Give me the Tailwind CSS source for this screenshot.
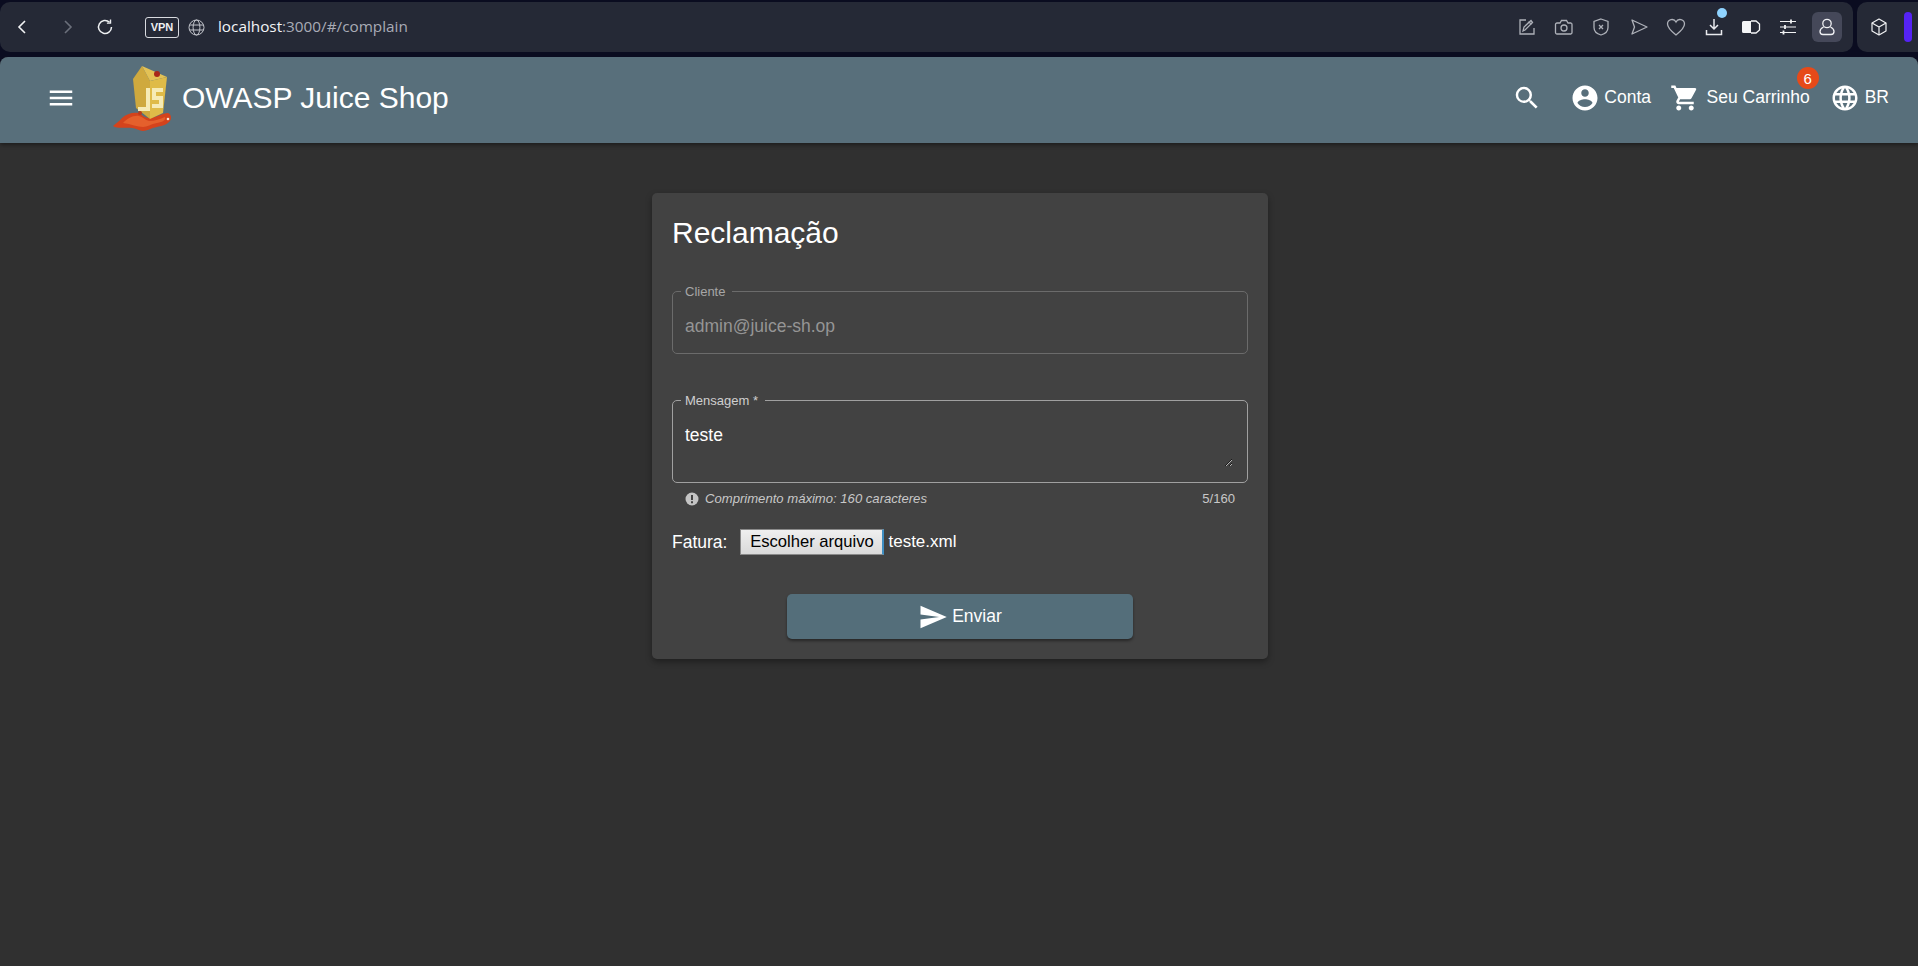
<!DOCTYPE html>
<html lang="pt-BR">
<head>
<meta charset="utf-8">
<title>OWASP Juice Shop</title>
<script src="https://cdn.jsdelivr.net/npm/@tailwindcss/browser@4"></script>
</head>
<body class="m-0 h-[966px] w-[1918px] overflow-hidden bg-[#0a0c20] font-['Liberation_Sans',Arial,sans-serif] text-white">
<!-- browser chrome -->
<div class="flex h-[57px] gap-[4px] pt-[2px] pb-[5px]">
  <div class="flex h-[50px] w-[1853px] items-center rounded-[10px] bg-[#252936] pl-[14px]">
    <svg class="h-[16px] w-[16px]" viewBox="0 0 16 16" fill="none" stroke="#f2f3f5" stroke-width="1.6"><path d="M11 2 5 8l6 6"/></svg>
    <svg class="ml-[30px] h-[16px] w-[16px]" viewBox="0 0 16 16" fill="none" stroke="#6b6f7b" stroke-width="1.6"><path d="m5 2 6 6-6 6"/></svg>
    <svg class="ml-[20px] h-[18px] w-[18px]" viewBox="0 0 18 18" fill="none" stroke="#eef0f2" stroke-width="1.5"><path d="M15.5 9a6.5 6.5 0 1 1-2-4.700"/><path d="M14.500 1.500v3.600h-3.600" stroke-width="1.400"/></svg>
    <span class="ml-[31px] flex h-[21px] w-[34px] items-center justify-center rounded-[3px] border border-[#d8dadf] text-[11px] font-bold text-[#eef0f2]">VPN</span>
    <svg class="ml-[9px] h-[17px] w-[17px]" viewBox="0 0 17 17" fill="none" stroke="#c3c5cc" stroke-width="1"><circle cx="8.500" cy="8.500" r="7.500"/><ellipse cx="8.500" cy="8.500" rx="3.400" ry="7.500"/><path d="M1.500 6h14M1.500 11h14"/></svg>
    <span class="ml-[13px] font-['Open_Sans',sans-serif] text-[15.300px] leading-none text-[#a9acb6]"><span class="text-[#f3f4f6]">localhost</span>:3000/#/complain</span>
    <div class="ml-auto flex items-center pr-[11px]">
      <div class="flex w-[37.400px] justify-center"><svg class="h-[20px] w-[20px]" viewBox="0 0 20 20" fill="none" stroke="#aeb1b9" stroke-width="1.300"><path d="M9 3H3v14h14v-6"/><path d="M6 14l2-1 7.500-7.500-1.500-2L7 10z"/><path d="M11 5l4 2"/></svg></div>
      <div class="flex w-[37.400px] justify-center"><svg class="h-[20px] w-[20px]" viewBox="0 0 20 20" fill="none" stroke="#aeb1b9" stroke-width="1.300"><path d="M3 6h3l1.500-2.500h5L14 6h3a1.500 1.500 0 0 1 1 1.500v8A1.500 1.500 0 0 1 17 17H3a1.500 1.500 0 0 1-1.500-1.500v-8A1.500 1.500 0 0 1 3 6z"/><circle cx="10" cy="11" r="3"/></svg></div>
      <div class="flex w-[37.400px] justify-center"><svg class="h-[20px] w-[20px]" viewBox="0 0 20 20" fill="none" stroke="#aeb1b9" stroke-width="1.300"><path d="M10 2l7 2.500v6c0 4-3.500 6.500-7 7.500-3.500-1-7-3.500-7-7.500v-6z"/><path d="m8 8 4 4m0-4-4 4"/></svg></div>
      <div class="flex w-[37.400px] justify-center"><svg class="h-[20px] w-[20px]" viewBox="0 0 20 20" fill="none" stroke="#aeb1b9" stroke-width="1.300" stroke-linejoin="round"><path d="M3 3l15 7-15 7 2.500-7z"/></svg></div>
      <div class="flex w-[37.400px] justify-center"><svg class="h-[20px] w-[20px]" viewBox="0 0 20 20" fill="none" stroke="#aeb1b9" stroke-width="1.300"><path d="M10 18C5 14 1.500 11 1.500 7A4.500 4.500 0 0 1 10 5a4.500 4.500 0 0 1 8.500 2c0 4-3.500 7-8.500 11z"/></svg></div>
      <div class="relative flex w-[37.400px] justify-center"><svg class="h-[20px] w-[20px]" viewBox="0 0 20 20" fill="none" stroke="#e8e9ed" stroke-width="1.500"><path d="M10 2v10m-4-4 4 4 4-4"/><path d="M2.500 13v4.500h15V13"/></svg><span class="absolute top-[-9px] left-[22px] h-[10px] w-[10px] rounded-full bg-[#8fd3ff]"></span></div>
      <div class="flex w-[37.400px] justify-center"><svg class="h-[14px] w-[20px]" viewBox="0 0 20 14"><path d="M2.500 1h7.500v12H2.500A1.500 1.500 0 0 1 1 11.500v-9A1.500 1.500 0 0 1 2.500 1z" fill="#f4f5f7"/><path d="M10 1h5l3.500 3v6L15 13h-5" fill="none" stroke="#f4f5f7" stroke-width="1.300"/></svg></div>
      <div class="flex w-[37.400px] justify-center"><svg class="h-[16px] w-[16px]" viewBox="0 0 16 16" fill="none" stroke="#f1f2f4" stroke-width="1.200"><path d="M0 2.500h16M0 8h16M0 13.500h16"/><path d="M11 .5v4M5 6v4M3.500 11.500v4" stroke-width="1.800"/></svg></div>
      <div class="ml-[5px] flex h-[30px] w-[30px] items-center justify-center rounded-[6px] bg-[#454859]"><svg class="h-[20px] w-[20px]" viewBox="0 0 20 20" fill="none" stroke="#f0f1f4" stroke-width="1.300"><circle cx="10" cy="6.500" r="4.200"/><path d="M6.500 10c-2 1-3.500 2.500-3.500 4.500S4.500 17.500 6 17.500h8c1.500 0 3-1 3-3s-1.500-3.500-3.500-4.500"/></svg></div>
    </div>
  </div>
  <div class="flex h-[50px] flex-1 items-center rounded-l-[10px] bg-[#252936] pl-[14px]">
    <svg class="h-[18px] w-[16px]" viewBox="0 0 16 18" fill="none" stroke="#f1f2f4" stroke-width="1.200" stroke-linejoin="round"><path d="M8 1l7 4v8l-7 4-7-4V5z"/><path d="M1 5l7 4 7-4M8 9v8"/></svg>
    <span class="ml-[17px] h-[30px] w-[8px] rounded-full bg-[#5523f5]"></span>
  </div>
</div>
<!-- app -->
<div class="h-[909px] overflow-hidden rounded-t-[8px] bg-[#303030]">
  <header class="relative z-10 flex h-[86px] items-center bg-[#586f7b] pr-[29px] pb-[5px] shadow-[0_2px_4px_rgba(0,0,0,0.4)]">
    <svg class="ml-[46px] h-[30px] w-[30px]" viewBox="0 0 24 24" fill="#fff"><path d="M3 18h18v-2H3v2zm0-5h18v-2H3v2zm0-7v2h18V6H3z"/></svg>
    <svg class="mt-[3px] ml-[37px] h-[66px] w-[60px]" viewBox="0 0 60 66">
      <path d="M0 60C3 57 7 55 9 52 13 48 20 46 25 47 29 48 31 52 36 52 42 52 50 47 55 47 58 48 59 52 57 55 54 59 48 60 44 61 38 62 34 65 30 65 26 65 23 62 19 62 13 61 4 63 0 60z" fill="#d4431c"/>
      <path d="M10 57C14 53 20 49 26 50 30 51 32 54 36 55 42 55 47 53 52 51 53 54 50 56 44 57 38 58 34 61 30 61 25 61 18 58 10 57z" fill="#e5602c"/>
      <path d="M20 13 29 0 37 15 37 53 23 42z" fill="#cfa93e"/>
      <path d="M29 0 54 11 37 15z" fill="#e3c255"/>
      <path d="M37 15 54 11 50 47 37 53z" fill="#dfbb48"/>
      <circle cx="44" cy="8" r="3" fill="#a8281a"/>
      <path d="M33 22h4v23H25v-4h8zM39 22h11v4h-7v4h7v12H39v-4h7v-4h-7z" fill="#f6ebb5"/>
      <circle cx="27" cy="47" r="2" fill="#b93a1d"/><circle cx="55" cy="53" r="1.300" fill="#fde3d2"/>
    </svg>
    <span class="ml-[9px] text-[30px] leading-none">OWASP Juice Shop</span>
    <div class="ml-auto flex items-center">
      <svg class="h-[30px] w-[30px]" viewBox="0 0 24 24" fill="#fff"><path d="M15.500 14h-.79l-.28-.27A6.470 6.470 0 0 0 16 9.500 6.500 6.500 0 1 0 9.500 16c1.610 0 3.090-.59 4.230-1.570l.27.28v.79l5 4.990L20.490 19l-4.990-5zm-6 0C7.010 14 5 11.990 5 9.500S7.010 5 9.500 5 14 7.010 14 9.500 11.990 14 9.500 14z"/></svg>
      <svg class="ml-[28.500px] h-[30px] w-[30px]" viewBox="0 0 24 24" fill="#fff"><path d="M12 2C6.480 2 2 6.480 2 12s4.480 10 10 10 10-4.480 10-10S17.520 2 12 2zm0 3c1.660 0 3 1.340 3 3s-1.340 3-3 3-3-1.340-3-3 1.340-3 3-3zm0 14.200a7.200 7.200 0 0 1-6-3.220c.03-1.990 4-3.080 6-3.080 1.990 0 5.970 1.090 6 3.080a7.200 7.200 0 0 1-6 3.220z"/></svg>
      <span class="ml-[4px] text-[17.500px]">Conta</span>
      <svg class="ml-[19px] h-[30px] w-[30px]" viewBox="0 0 24 24" fill="#fff"><path d="M7 18c-1.100 0-1.990.9-1.990 2S5.900 22 7 22s2-.9 2-2-.9-2-2-2zM1 2v2h2l3.600 7.590-1.350 2.450c-.16.28-.25.61-.25.960 0 1.100.9 2 2 2h12v-2H7.420c-.14 0-.25-.11-.25-.25l.03-.12.9-1.630h7.450c.75 0 1.410-.41 1.750-1.030l3.580-6.490A1 1 0 0 0 20.010 4H5.210l-.94-2H1zm16 16c-1.100 0-1.990.9-1.990 2s.89 2 1.990 2 2-.9 2-2-.9-2-2-2z"/></svg>
      <span class="relative ml-[6.500px] text-[17.500px]">Seu Carrinho<span class="absolute top-[-17px] right-[-9px] flex h-[22px] w-[22px] items-center justify-center rounded-full bg-[#e64a19] text-[15px] leading-none">6</span></span>
      <svg class="ml-[20px] h-[30px] w-[30px]" viewBox="0 0 24 24" fill="#fff"><path d="M11.990 2C6.470 2 2 6.480 2 12s4.470 10 9.990 10C17.520 22 22 17.520 22 12S17.520 2 11.990 2zm6.930 6h-2.950a15.650 15.650 0 0 0-1.380-3.560A8.030 8.030 0 0 1 18.920 8zM12 4.040c.83 1.200 1.480 2.530 1.910 3.960h-3.820c.43-1.430 1.080-2.760 1.910-3.960zM4.260 14C4.100 13.360 4 12.690 4 12s.1-1.360.26-2h3.380c-.08.66-.14 1.320-.14 2s.06 1.340.14 2H4.260zm.82 2h2.950c.32 1.250.78 2.450 1.380 3.560A7.987 7.987 0 0 1 5.080 16zm2.950-8H5.080a7.987 7.987 0 0 1 4.330-3.560A15.650 15.650 0 0 0 8.030 8zM12 19.960c-.83-1.200-1.480-2.530-1.910-3.960h3.820c-.43 1.430-1.080 2.760-1.910 3.960zM14.340 14H9.660c-.09-.66-.16-1.320-.16-2s.07-1.350.16-2h4.680c.09.65.16 1.320.16 2s-.07 1.340-.16 2zm.25 5.560c.6-1.110 1.060-2.310 1.380-3.560h2.950a8.030 8.030 0 0 1-4.330 3.560zM16.360 14c.08-.66.14-1.320.14-2s-.06-1.340-.14-2h3.380c.16.64.26 1.310.26 2s-.1 1.360-.26 2h-3.380z"/></svg>
      <span class="ml-[5px] text-[17.500px]">BR</span>
    </div>
  </header>
  <main class="flex justify-center pt-[50px] pl-[2px]">
    <section class="w-[616px] rounded-[5px] bg-[#424242] px-[20px] pt-[24px] pb-[20px] shadow-[0_3px_6px_rgba(0,0,0,0.35)]">
      <h1 class="text-[30px] leading-[32px]">Reclamação</h1>
      <fieldset class="mt-[34px] h-[71px] rounded-[5px] border border-[#6b6b6b] px-[8px]">
        <legend class="pt-[2px] pr-[7px] pl-[4px] text-[13px] leading-[14px] text-[#a6a6a6]">Cliente</legend>
        <input class="mt-[16px] w-full bg-transparent px-[4px] text-[17.500px] leading-[22px] text-[#959595] outline-none" value="admin@juice-sh.op" disabled>
      </fieldset>
      <fieldset class="mt-[38px] h-[91px] rounded-[5px] border border-[#a0a0a0] px-[8px]">
        <legend class="pt-[2px] pr-[7px] pl-[4px] text-[13px] leading-[14px] text-[#cfcfcf]">Mensagem *</legend>
        <textarea class="mt-[16px] block h-[43px] w-[552px] resize-y bg-transparent px-[4px] text-[17.500px] leading-[22px] text-white outline-none">teste</textarea>
      </fieldset>
      <div class="mt-[7px] flex items-center justify-between px-[13px] text-[13.100px] leading-[18px] text-[#c8c8c8]">
        <span class="flex items-center gap-[6px] italic"><svg class="h-[14px] w-[14px]" viewBox="0 0 14 14"><circle cx="7" cy="7" r="6.500" fill="#c4c4c4"/><path d="M6 3h2v5H6zM6 9.200h2v2H6z" fill="#424242"/></svg>Comprimento máximo: 160 caracteres</span>
        <span>5/160</span>
      </div>
      <div class="mt-[21px] flex h-[26px] items-center text-[17.500px]">
        <span>Fatura:</span>
        <button class="ml-[13px] h-[26px] w-[144px] border-y border-l border-r-2 border-y-[#8a8a8a] border-r-[#3f8fc4] border-l-[#8a8a8a] bg-linear-to-b from-[#efefef] to-[#dadada] text-[16.600px] leading-none text-black">Escolher arquivo</button>
        <span class="ml-[4px] text-[17px]">teste.xml</span>
      </div>
      <div class="mt-[39px] flex justify-center">
        <button class="flex h-[45px] w-[346px] items-center justify-center gap-[4px] rounded-[5px] bg-[#546e7a] text-[17.500px] shadow-[0_2px_3px_rgba(0,0,0,0.4)]">
          <svg class="h-[30px] w-[30px]" viewBox="0 0 24 24" fill="#fff"><path d="M2.010 21 23 12 2.010 3 2 10l15 2-15 2z"/></svg>Enviar
        </button>
      </div>
    </section>
  </main>
</div>
</body>
</html>
